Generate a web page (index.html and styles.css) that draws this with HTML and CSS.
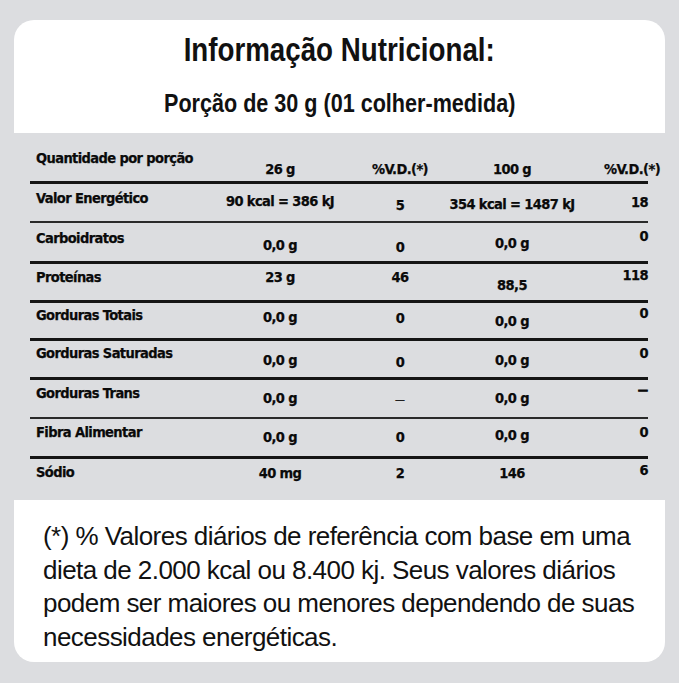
FILE: index.html
```html
<!DOCTYPE html>
<html lang="pt-BR">
<head>
<meta charset="utf-8">
<title>Informação Nutricional</title>
<link rel="stylesheet" href="styles.css">
</head>
<body>
<div class="sheet">
  <header class="head">
    <h1 class="title"><span>Informação Nutricional:</span></h1>
    <p class="portion"><span>Porção de 30 g (01 colher-medida)</span></p>
  </header>

  <section class="table">
    <div class="row hdr">
      <div class="lbl t17">Quantidade por porção</div>
      <div class="c1 t28">26 g</div>
      <div class="c2 t28">%V.D.(*)</div>
      <div class="c3 t28">100 g</div>
      <div class="c4 t28 wide">%V.D.(*)</div>
    </div>
    <div class="row h40">
      <div class="lbl t6">Valor Energético</div>
      <div class="c1 t9">90 kcal = 386 kJ</div>
      <div class="c2 t13">5</div>
      <div class="c3 t12">354 kcal = 1487 kJ</div>
      <div class="c4 t10">18</div>
    </div>
    <div class="row thin h40">
      <div class="lbl t7">Carboidratos</div>
      <div class="c1 t14">0,0 g</div>
      <div class="c2 t16">0</div>
      <div class="c3 t12">0,0 g</div>
      <div class="c4 t5">0</div>
    </div>
    <div class="row h39">
      <div class="lbl t5">Proteínas</div>
      <div class="c1 t5">23 g</div>
      <div class="c2 t5">46</div>
      <div class="c3 t13">88,5</div>
      <div class="c4 t3">118</div>
    </div>
    <div class="row h38">
      <div class="lbl t4">Gorduras Totais</div>
      <div class="c1 t6">0,0 g</div>
      <div class="c2 t7">0</div>
      <div class="c3 t10">0,0 g</div>
      <div class="c4 t2">0</div>
    </div>
    <div class="row h39">
      <div class="lbl t4">Gorduras Saturadas</div>
      <div class="c1 t11">0,0 g</div>
      <div class="c2 t13">0</div>
      <div class="c3 t11">0,0 g</div>
      <div class="c4 t4">0</div>
    </div>
    <div class="row h40">
      <div class="lbl t5">Gorduras Trans</div>
      <div class="c1 t10">0,0 g</div>
      <div class="c2 t12 dash">—</div>
      <div class="c3 t10">0,0 g</div>
      <div class="c4 t3 dash heavy">—</div>
    </div>
    <div class="row thin h39">
      <div class="lbl t5">Fibra Alimentar</div>
      <div class="c1 t10">0,0 g</div>
      <div class="c2 t10">0</div>
      <div class="c3 t8">0,0 g</div>
      <div class="c4 t5">0</div>
    </div>
    <div class="row last">
      <div class="lbl t5">Sódio</div>
      <div class="c1 t6">40 mg</div>
      <div class="c2 t6">2</div>
      <div class="c3 t6">146</div>
      <div class="c4 t3">6</div>
    </div>
  </section>

  <footer class="note">
    <p>(*) % Valores diários de referência com base em uma<br>dieta de 2.000 kcal ou 8.400 kj. Seus valores diários<br>podem ser maiores ou menores dependendo de suas<br>necessidades energéticas.</p>
  </footer>
</div>
</body>
</html>
```

FILE: styles.css
```css
html, body {
  margin: 0;
  padding: 0;
}

body {
  width: 679px;
  height: 683px;
  overflow: hidden;
  background: #dcdde0;
  color: #111;
}

.sheet {
  padding-top: 20px;
}

.head {
  margin: 0 14px;
  width: 651px;
  height: 113px;
  box-sizing: border-box;
  padding-top: 10px;
  background: #fff;
  border-radius: 20px 20px 0 0;
  text-align: center;
  font-family: "Liberation Sans", Arial, sans-serif;
  font-weight: bold;
}

.title {
  margin: 0;
  font-size: 33px;
  line-height: 40px;
  font-weight: bold;
}

.title span,
.portion span {
  display: inline-block;
  white-space: nowrap;
  transform: scaleX(0.84);
}

.portion {
  margin: 17px 0 0;
  font-size: 26px;
  line-height: 32px;
}

.portion span {
  transform: scaleX(0.83);
}

.table {
  margin-left: 30px;
  width: 618px;
  height: 367px;
  font-family: "DejaVu Sans", Verdana, sans-serif;
  font-stretch: condensed;
  font-weight: bold;
  font-size: 14.5px;
  line-height: 16px;
  letter-spacing: -0.6px;
  color: #0a0a0a;
  -webkit-text-stroke: 0.25px #0a0a0a;
}

.row {
  display: grid;
  grid-template-columns: 200px 100px 140px 84px 94px;
  box-sizing: border-box;
  border-top: 3px solid #151515;
}

.row > div {
  display: flex;
  white-space: nowrap;
  box-sizing: border-box;
}

.row.hdr {
  border-top: 0;
  height: 48px;
}

.row.thin {
  border-top: 2px solid #2a2a2a;
}

.h38 { height: 38px; }
.h39 { height: 39px; }
.h40 { height: 40px; }
.row.last { height: 44px; }

.lbl {
  padding-left: 6px;
  justify-content: flex-start;
}

.c1, .c2, .c3 {
  justify-content: center;
}

.c4 {
  justify-content: flex-end;
}

.c4.wide {
  margin-right: -12px;
}

.dash {
  font-size: 11px;
  font-weight: normal;
  letter-spacing: 0;
}

.dash.heavy {
  font-weight: bold;
  -webkit-text-stroke: 1px #0a0a0a;
}

.t2 { padding-top: 2px; }
.t3 { padding-top: 3px; }
.t4 { padding-top: 4px; }
.t5 { padding-top: 5px; }
.t6 { padding-top: 6px; }
.t7 { padding-top: 7px; }
.t8 { padding-top: 8px; }
.t9 { padding-top: 9px; }
.t10 { padding-top: 10px; }
.t11 { padding-top: 11px; }
.t12 { padding-top: 12px; }
.t13 { padding-top: 13px; }
.t14 { padding-top: 14px; }
.t16 { padding-top: 16px; }
.t17 { padding-top: 17px; }
.t28 { padding-top: 28px; }

.note {
  margin: 0 14px;
  width: 651px;
  height: 162px;
  box-sizing: border-box;
  padding: 20px 0 0 29px;
  background: #fff;
  border-radius: 0 0 20px 20px;
  font-family: "Liberation Sans", Arial, sans-serif;
  font-size: 26px;
  line-height: 33.5px;
  letter-spacing: -0.55px;
}

.note p {
  margin: 0;
  white-space: nowrap;
}
```
